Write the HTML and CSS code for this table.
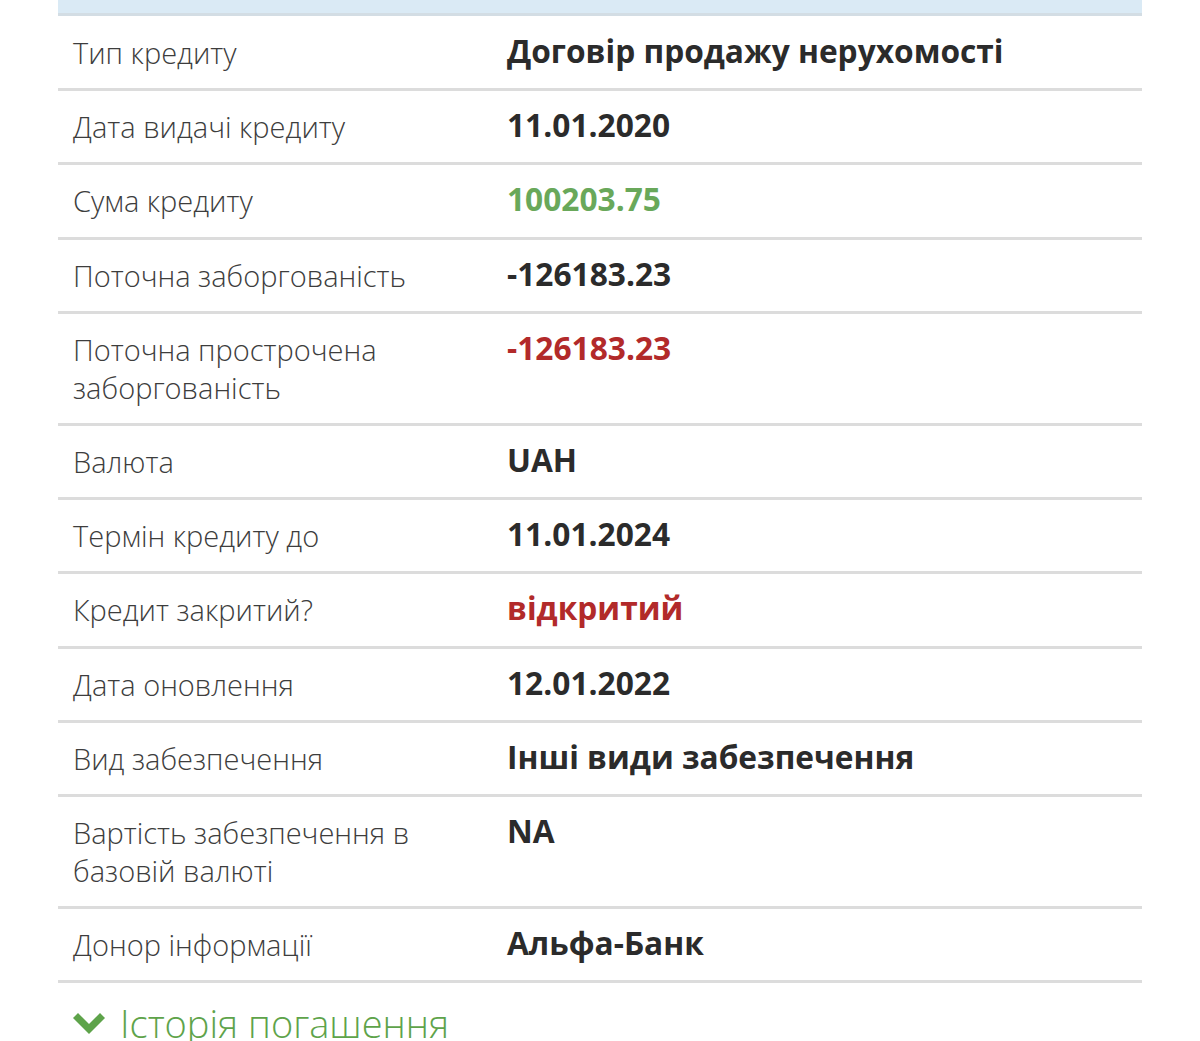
FILE: index.html
```html
<!DOCTYPE html>
<html lang="uk">
<head>
<meta charset="utf-8">
<link rel="stylesheet" href="styles.css">
</head>
<body>
<div class="wrap">
  <div class="topbar"></div>
  <div class="table">
    <div class="row"><div class="label">Тип кредиту</div><div class="value">Договір продажу нерухомості</div></div>
    <div class="row"><div class="label">Дата видачі кредиту</div><div class="value">11.01.2020</div></div>
    <div class="row"><div class="label">Сума кредиту</div><div class="value green">100203.75</div></div>
    <div class="row"><div class="label">Поточна заборгованість</div><div class="value">-126183.23</div></div>
    <div class="row"><div class="label">Поточна прострочена заборгованість</div><div class="value red">-126183.23</div></div>
    <div class="row"><div class="label">Валюта</div><div class="value">UAH</div></div>
    <div class="row"><div class="label">Термін кредиту до</div><div class="value">11.01.2024</div></div>
    <div class="row"><div class="label">Кредит закритий?</div><div class="value red">відкритий</div></div>
    <div class="row"><div class="label">Дата оновлення</div><div class="value">12.01.2022</div></div>
    <div class="row"><div class="label">Вид забезпечення</div><div class="value">Інші види забезпечення</div></div>
    <div class="row"><div class="label">Вартість забезпечення в базовій валюті</div><div class="value">NA</div></div>
    <div class="row"><div class="label">Донор інформації</div><div class="value">Альфа-Банк</div></div>
  </div>
  <div class="history">
    <svg class="chev" viewBox="0 0 32 22" width="32" height="22"><path d="M0 6 L5 1 L16 12 L27 1 L32 6 L16 22 Z" fill="#5ea34a"/></svg>
    <span>Історія погашення</span>
  </div>
</div>
</body>
</html>
```
FILE: styles.css
```css
html, body {
  margin: 0;
  padding: 0;
  background: #ffffff;
}
.wrap {
  width: 1084px;
  margin-left: 58px;
  font-family: "Open Sans", "Noto Sans", sans-serif;
}
.topbar {
  height: 13px;
  background: #daeaf5;
  border-bottom: 3px solid #d3dde4;
  margin-bottom: 1px;
}
.row {
  display: grid;
  grid-template-columns: 434px 1fr;
  border-bottom: 3px solid #dcdcdc;
  padding: 17px 0 16.2px 15px;
}
.label {
  font-size: 29px;
  font-weight: 300;
  line-height: 38px;
  color: #3d3d3d;
  padding-right: 20px;
}
.value {
  font-size: 31.7px;
  font-weight: 700;
  line-height: 34px;
  color: #2b2b2b;
}
.green { color: #69a85a; }
.red { color: #b22a2a; }
.history {
  display: flex;
  align-items: center;
  gap: 15px;
  padding: 18px 0 0 15px;
  color: #5ea34a;
  font-size: 38px;
  font-weight: 300;
  line-height: 44px;
}
.chev { flex: none; }
```
